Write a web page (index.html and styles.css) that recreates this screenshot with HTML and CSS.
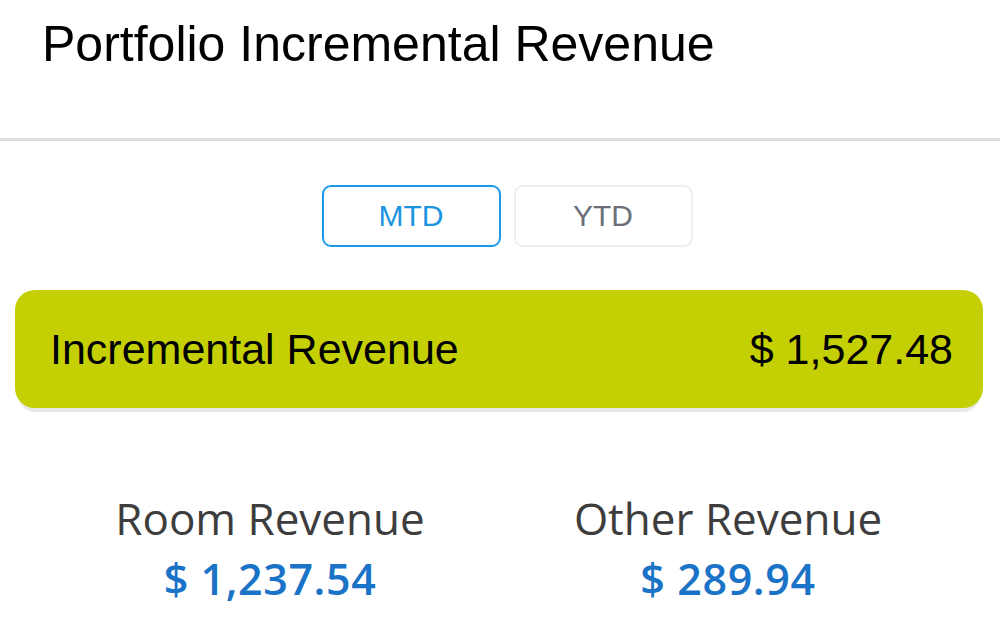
FILE: index.html
```html
<!DOCTYPE html>
<html lang="en">
<head>
  <meta charset="UTF-8" />
  <meta name="viewport" content="width=device-width, initial-scale=1.0" />
  <title>Portfolio Incremental Revenue</title>
  <link rel="stylesheet" href="styles.css">
</head>
<body>
  <div class="widget">
    <div class="widget-header">
      <h1>Portfolio Incremental Revenue</h1>
    </div>

    <div class="period-toggle">
      <button class="period active">MTD</button>
      <button class="period">YTD</button>
    </div>

    <div class="total-bar">
      <span class="total-label">Incremental Revenue</span>
      <span class="total-value">$ 1,527.48</span>
    </div>

    <div class="breakdown">
      <div class="stat">
        <div class="stat-label">Room Revenue</div>
        <div class="stat-value">$ 1,237.54</div>
      </div>
      <div class="stat">
        <div class="stat-label">Other Revenue</div>
        <div class="stat-value">$ 289.94</div>
      </div>
    </div>
  </div>
</body>
</html>
```

FILE: styles.css
```css
*, *::before, *::after {
  box-sizing: border-box;
  margin: 0;
  padding: 0;
}

body {
  font-family: "Liberation Sans", Arial, sans-serif;
  background-color: #ffffff;
  color: #000000;
}

.widget {
  width: 1000px;
}

.widget-header {
  height: 141px;
  padding: 20px 42px 0;
  border-bottom: 3px solid #dcdcdc;
}

h1 {
  font-size: 50px;
  font-weight: 400;
  line-height: 49px;
}

.period-toggle {
  display: flex;
  justify-content: center;
  gap: 13px;
  margin-top: 44px;
  padding-left: 14px;
}

.period {
  width: 179px;
  height: 62px;
  font-family: "Liberation Sans", Arial, sans-serif;
  font-size: 30px;
  color: #6b6f78;
  background: #ffffff;
  border: 2px solid #eceef0;
  border-radius: 9px;
}

.period.active {
  color: #1b95e0;
  border-color: #1a9be8;
}

.total-bar {
  display: flex;
  justify-content: space-between;
  align-items: center;
  height: 118px;
  margin: 43px 17px 0 15px;
  padding: 0 30px 0 35px;
  background-color: #c4d003;
  border-radius: 20px;
  box-shadow: 0 7px 1px -3px #e8e8e8;
  font-size: 43px;
}

.breakdown {
  display: grid;
  grid-template-columns: 1fr 1fr;
  margin-top: 84px;
  padding: 0 43px 0 41px;
  font-family: "Open Sans", sans-serif;
  text-align: center;
}

.stat-label {
  font-size: 44px;
  line-height: 52px;
  color: #3d3d3d;
}

.stat-value {
  margin-top: 10px;
  font-size: 43px;
  font-weight: 600;
  letter-spacing: 0.6px;
  line-height: 50px;
  color: #1a73c6;
}
```
